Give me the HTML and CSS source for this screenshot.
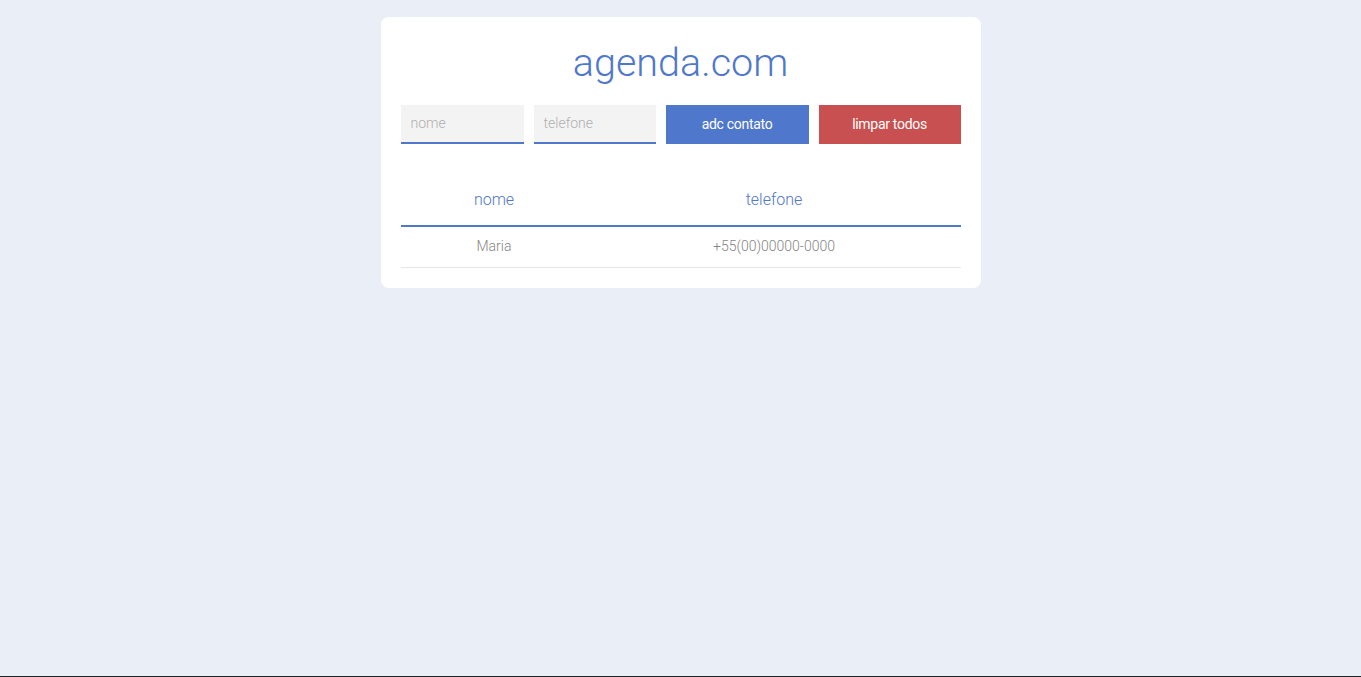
FILE: index.html
```html
<!DOCTYPE html>
<html lang="pt">
<head>
<meta charset="utf-8">
<title>agenda.com</title>
<link rel="stylesheet" href="styles.css">
</head>
<body>
<main class="card">
  <h1 class="title">agenda.com</h1>
  <form class="form">
    <input class="field field-name" type="text" placeholder="nome">
    <input class="field field-phone" type="text" placeholder="telefone">
    <button class="btn btn-add" type="button">adc contato</button>
    <button class="btn btn-clear" type="button">limpar todos</button>
  </form>
  <table class="table">
    <thead>
      <tr><th class="col-name">nome</th><th class="col-phone">telefone</th></tr>
    </thead>
    <tbody>
      <tr><td>Maria</td><td>+55(00)00000-0000</td></tr>
    </tbody>
  </table>
</main>
</body>
</html>
```
FILE: styles.css
```css
* { box-sizing: border-box; }
html, body { margin: 0; padding: 0; }
body {
  background: #eaeff7;
  font-family: Roboto, "Liberation Sans", sans-serif;
  font-weight: 300;
  min-height: 100vh;
  border-bottom: 1px solid #222;
  padding-top: 17px;
}
.card {
  width: 600px;
  margin: 0 auto;
  background: #fff;
  border-radius: 8px;
  padding: 20px 20px 20px;
}
.title {
  margin: 0;
  padding-top: 1px;
  text-align: center;
  font-weight: 300;
  font-size: 39.5px;
  line-height: 50px;
  color: #4f77cb;
  height: 68px;
}
.form {
  display: flex;
  gap: 10px;
}
.field {
  border: none;
  border-bottom: 2px solid #4f77cb;
  background: #f3f3f3;
  height: 39px;
  padding: 0 10px 1px;
  font-family: inherit;
  font-weight: 300;
  font-size: 14px;
  outline: none;
}
.field::placeholder { color: #b0b0b0; }
.field-name { width: 123px; }
.field-phone { width: 122px; }
.btn {
  border: none;
  height: 39px;
  padding: 0 0 1px;
  color: #fff;
  font-family: inherit;
  font-weight: 400;
  font-size: 14px;
  letter-spacing: -0.3px;
}
.btn-add { width: 143px; background: #4f77cb; }
.btn-clear { width: 142px; background: #c85050; }
.table {
  width: 100%;
  border-collapse: collapse;
  margin-top: 31px;
}
.table th {
  font-weight: 300;
  font-size: 16px;
  color: #4f77cb;
  height: 51px;
  border-bottom: 2px solid #4f77cb;
  text-align: center;
  padding: 0 0 2px;
}
.col-name { width: 187px; }
.table td {
  text-align: center;
  font-size: 14px;
  color: #858585;
  height: 41px;
  border-bottom: 1px solid #e6e6e6;
  padding: 0 0 2px;
}
```
